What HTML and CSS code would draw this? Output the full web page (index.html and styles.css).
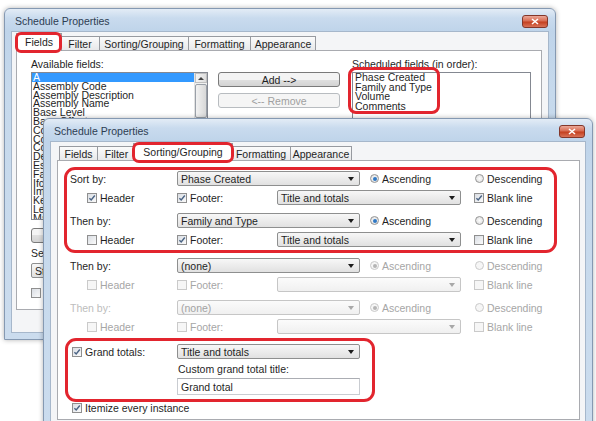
FILE: index.html
```html
<!DOCTYPE html>
<html lang="en">
<head>
  <meta charset="UTF-8">
  <title>Schedule Properties</title>
  <link rel="stylesheet" href="styles.css">
</head>
<body>
  <!-- back window: Fields tab -->
  <div class="win win-back">
    <div class="titlebar">
      <span class="title">Schedule Properties</span>
      <span class="close"><svg width="8" height="7" viewBox="0 0 8 7"><path d="M1 1 7 6M7 1 1 6" stroke="#fff" stroke-width="1.6"/></svg></span>
    </div>
    <div class="client">
      <div class="tabs">
        <span class="tab active mark mark-fields bt-fields">Fields</span>
        <span class="tab bt-filter">Filter</span>
        <span class="tab bt-sort">Sorting/Grouping</span>
        <span class="tab bt-format">Formatting</span>
        <span class="tab bt-appear">Appearance</span>
      </div>
      <div class="panel fields-panel">
        <div class="avail-col">
          <div class="flabel">Available fields:</div>
          <div class="listbox avail-list">
            <div class="items">
              <div class="sel">A</div>
              <div>Assembly Code</div>
              <div>Assembly Description</div>
              <div>Assembly Name</div>
              <div>Base Level</div>
              <div>Base Offset</div>
              <div>Comments</div>
              <div>Cost</div>
              <div>Count</div>
              <div>Description</div>
              <div>Estimated Reinforcement Volume</div>
              <div>Family</div>
              <div>IfcGUID</div>
              <div>Image</div>
              <div>Keynote</div>
              <div>Length</div>
              <div>Manufacturer</div>
            </div>
            <div class="vscroll">
              <span class="sb-btn"></span>
              <span class="sb-thumb"></span>
            </div>
          </div>
          <div class="btn param-btn">Add Parameter...</div>
          <div class="flabel gap-label">Select available fields from:</div>
          <div class="combo from-combo">Structural Columns</div>
          <div class="chk linked"><i class="box"></i>Include elements in linked files</div>
        </div>
        <div class="btn-col">
          <div class="btn">Add --&gt;</div>
          <div class="btn dis">&lt;-- Remove</div>
        </div>
        <div class="sched-col">
          <div class="flabel">Scheduled fields (in order):</div>
          <div class="listbox sched-list">
            <div class="items mark mark-sched">
              <div>Phase Created</div>
              <div>Family and Type</div>
              <div>Volume</div>
              <div>Comments</div>
            </div>
          </div>
        </div>
      </div>
    </div>
  </div>

  <!-- front window: Sorting/Grouping tab -->
  <div class="win win-front">
    <div class="titlebar">
      <span class="title">Schedule Properties</span>
      <span class="close"><svg width="8" height="7" viewBox="0 0 8 7"><path d="M1 1 7 6M7 1 1 6" stroke="#fff" stroke-width="1.6"/></svg></span>
    </div>
    <div class="client">
      <div class="tabs">
        <span class="tab ft-fields">Fields</span>
        <span class="tab ft-filter">Filter</span>
        <span class="tab active mark mark-tab ft-sort">Sorting/Grouping</span>
        <span class="tab ft-format">Formatting</span>
        <span class="tab ft-appear">Appearance</span>
      </div>
      <div class="panel sort-panel">
        <div class="mark mark-sort">
          <div class="sgroup">
            <span class="slabel">Sort by:</span>
            <span class="combo c-by">Phase Created</span>
            <span class="rad asc on"><i class="dot"></i>Ascending</span>
            <span class="rad desc"><i class="dot"></i>Descending</span>
            <span class="chk hdr"><i class="box"><svg width="8" height="8" viewBox="0 0 8 8"><path d="M1.4 4.2 3.2 6 6.8 1.5" fill="none" stroke="#4a6384" stroke-width="1.4"/></svg></i>Header</span>
            <span class="chk ftr"><i class="box"><svg width="8" height="8" viewBox="0 0 8 8"><path d="M1.4 4.2 3.2 6 6.8 1.5" fill="none" stroke="#4a6384" stroke-width="1.4"/></svg></i>Footer:</span>
            <span class="combo c-ft">Title and totals</span>
            <span class="chk blank"><i class="box"><svg width="8" height="8" viewBox="0 0 8 8"><path d="M1.4 4.2 3.2 6 6.8 1.5" fill="none" stroke="#4a6384" stroke-width="1.4"/></svg></i>Blank line</span>
          </div>
          <div class="sgroup">
            <span class="slabel">Then by:</span>
            <span class="combo c-by">Family and Type</span>
            <span class="rad asc on"><i class="dot"></i>Ascending</span>
            <span class="rad desc"><i class="dot"></i>Descending</span>
            <span class="chk hdr"><i class="box"></i>Header</span>
            <span class="chk ftr"><i class="box"><svg width="8" height="8" viewBox="0 0 8 8"><path d="M1.4 4.2 3.2 6 6.8 1.5" fill="none" stroke="#4a6384" stroke-width="1.4"/></svg></i>Footer:</span>
            <span class="combo c-ft">Title and totals</span>
            <span class="chk blank"><i class="box"></i>Blank line</span>
          </div>
        </div>
        <div class="sgroup after-mark">
          <span class="slabel">Then by:</span>
          <span class="combo c-by">(none)</span>
          <span class="rad asc on dis"><i class="dot"></i>Ascending</span>
          <span class="rad desc dis"><i class="dot"></i>Descending</span>
          <span class="chk hdr dis"><i class="box"></i>Header</span>
          <span class="chk ftr dis"><i class="box"></i>Footer:</span>
          <span class="combo c-ft dis"></span>
          <span class="chk blank dis"><i class="box"></i>Blank line</span>
        </div>
        <div class="sgroup">
          <span class="slabel dis light">Then by:</span>
          <span class="combo c-by dis">(none)</span>
          <span class="rad asc on dis"><i class="dot"></i>Ascending</span>
          <span class="rad desc dis"><i class="dot"></i>Descending</span>
          <span class="chk hdr dis"><i class="box"></i>Header</span>
          <span class="chk ftr dis"><i class="box"></i>Footer:</span>
          <span class="combo c-ft dis"></span>
          <span class="chk blank dis"><i class="box"></i>Blank line</span>
        </div>
        <div class="grand mark mark-grand">
          <span class="chk g-chk"><i class="box"><svg width="8" height="8" viewBox="0 0 8 8"><path d="M1.4 4.2 3.2 6 6.8 1.5" fill="none" stroke="#4a6384" stroke-width="1.4"/></svg></i>Grand totals:</span>
          <span class="combo">Title and totals</span>
          <span class="g-cap">Custom grand total title:</span>
          <span class="tbox">Grand total</span>
        </div>
        <div class="chk itemize"><i class="box"><svg width="8" height="8" viewBox="0 0 8 8"><path d="M1.4 4.2 3.2 6 6.8 1.5" fill="none" stroke="#4a6384" stroke-width="1.4"/></svg></i>Itemize every instance</div>
      </div>
    </div>
  </div>
</body>
</html>
```

FILE: styles.css
```css
* { box-sizing: border-box; }
body { margin: 0; width: 596px; height: 421px; overflow: hidden; position: relative; background: #fff; font-family: "Liberation Sans", Arial, sans-serif; font-size: 10.5px; color: #1f1f1f; }

/* windows */
.win { position: absolute; display: flex; flex-direction: column; padding: 0 6px 6px; border: 1px solid #8599b2; border-radius: 6px 6px 0 0; background: linear-gradient(#e3ecf6, #c9dbee 9px, #bfd4ea 22px, #c6d9ec 80px, #cbdcee); box-shadow: 0 0 5px rgba(0, 0, 0, .3); }
.win-back { left: 4px; top: 8px; width: 552px; height: 332px; }
.win-front { left: 43px; top: 118px; width: 550px; height: 330px; }

.titlebar { height: 22px; padding: 2px 1px 0 4px; display: flex; align-items: center; justify-content: space-between; flex: none; }
.title { color: #2d3d52; }
.close { width: 26px; height: 13px; border: 1px solid #83372a; border-radius: 3px; background: linear-gradient(#eba899, #d86c52 45%, #c4401f 55%, #d97358); display: flex; align-items: center; justify-content: center; }

.client { flex: 1; display: flex; flex-direction: column; background: #f4f5f7; border: 1px solid #a6b7cb; }
.win-back .client { padding: 1px 6px 22px 4px; }
.win-front .client { padding: 1px 5px 0 6px; }

/* tabs */
.tabs { display: flex; align-items: flex-end; height: 17px; padding-left: 2px; position: relative; z-index: 1; flex: none; }
.tab { height: 14px; display: flex; align-items: center; justify-content: center; border: 1px solid #979aa0; border-bottom: 0; background: linear-gradient(#fbfbfb, #e7e8ea); margin-right: -1px; white-space: nowrap; }
.tab.active { height: 18px; margin: 0 -2px -1px -2px; padding-bottom: 2px; background: #fff; position: relative; z-index: 2; }
.bt-fields { width: 46px; }
.bt-filter { width: 40px; }
.bt-sort { width: 90px; }
.bt-format { width: 63px; }
.bt-appear { width: 66px; }
.ft-fields { width: 39px; }
.ft-filter { width: 39px; }
.ft-sort { width: 100px; }
.ft-format { width: 60px; }
.ft-appear { width: 62px; }

.panel { background: #fff; border: 1px solid #a9abb0; }
.fields-panel { flex: 1; display: flex; padding: 7px 0 0 14px; }
.sort-panel { height: 260px; flex: none; padding: 10px 0 0 12px; }

/* red annotation marks */
.mark { position: relative; }
.mark::after { content: ""; position: absolute; border: 3px solid #e2252e; border-radius: 9px; pointer-events: none; }
.mark-fields::after { top: -2px; left: -2px; right: -1px; bottom: -2px; border-radius: 6px; }
.mark-tab::after { top: -2px; left: -2px; right: -2px; bottom: -2px; border-radius: 7px; }
.mark-sched::after { top: -6px; left: -7px; right: -8px; bottom: -2px; border-radius: 8px; }
.mark-sort { width: 487px; }
.mark-sort::after { top: -4px; left: -6px; right: 0; bottom: -6px; border-radius: 11px; }
.mark-grand::after { top: -6px; left: -5px; right: 0; bottom: -7px; border-radius: 11px; }

/* fields tab */
.flabel { height: 12px; line-height: 12px; white-space: nowrap; }
.avail-col { width: 177px; display: flex; flex-direction: column; }
.listbox { background: #fff; border: 1px solid #848891; margin-top: 2px; }
.avail-list { height: 148px; display: flex; overflow: hidden; }
.items { white-space: nowrap; }
.avail-list .items { flex: 1; line-height: 8.8px; overflow: hidden; }
.avail-list .items div { padding-left: 1px; }
.sel { background: #3399ff; color: #fff; }
.vscroll { width: 13px; display: flex; flex-direction: column; background: #f1f1f1; border-left: 1px solid #e2e2e2; }
.sb-btn { height: 10px; border: 1px solid #c0c0c0; background: linear-gradient(90deg, #f4f4f4, #dedede); display: flex; align-items: center; justify-content: center; }
.sb-btn::after { content: ""; border-bottom: 3px solid #444; border-left: 3px solid transparent; border-right: 3px solid transparent; }
.sb-thumb { height: 34px; margin-top: 1px; border: 1px solid #9aa0a8; border-radius: 2px; background: linear-gradient(90deg, #f2f2f2, #d8d8d8); }
.param-btn { margin-top: 8px; }
.gap-label { margin-top: 4px; }
.from-combo { margin-top: 4px; }
.linked { margin-top: 9px; height: 12px; }

.btn-col { width: 122px; margin: 14px 0 0 10px; display: flex; flex-direction: column; gap: 6px; }
.btn { height: 15px; display: flex; align-items: center; justify-content: center; border: 1px solid #7a7a7a; border-radius: 3px; background: linear-gradient(#f4f4f4 50%, #e0e0e0 50%, #d3d3d3); white-space: nowrap; }
.btn.dis { border-color: #b8bcc0; background: #f5f5f5; color: #a0a0a0; }

.sched-col { width: 179px; margin-left: 12px; }
.sched-list { height: 148px; padding: 0 2px; }
.sched-list .items { display: inline-block; line-height: 9.7px; }

/* controls */
.combo { height: 15px; display: flex; align-items: center; justify-content: space-between; padding: 0 5px 0 3px; border: 1px solid #8e8f8f; border-radius: 2px; background: linear-gradient(#f7f7f7, #e1e1e1); white-space: nowrap; }
.combo::after { content: ""; margin-left: auto; border-top: 4px solid #1c1c1c; border-left: 3px solid transparent; border-right: 3px solid transparent; }
.combo.dis { color: #a3a3a3; border-color: #c6c6c6; background: linear-gradient(#fbfbfb, #f0f0f0); }
.combo.dis::after { border-top-color: #a8a8a8; }

.chk, .rad { display: flex; align-items: center; gap: 3px; white-space: nowrap; }
.box { width: 10px; height: 10px; flex: none; border: 1px solid #8f8f8f; background: linear-gradient(135deg, #d9dde3, #fbfbfb); display: flex; align-items: center; justify-content: center; }
.dot { width: 9px; height: 9px; flex: none; border-radius: 50%; border: 1px solid #959595; background: radial-gradient(#fdfdfd, #d9d9d9); display: flex; align-items: center; justify-content: center; }
.rad.on .dot::after { content: ""; width: 4px; height: 4px; border-radius: 50%; background: #2f78c4; }
.dis { color: #a6a6a6; }
.dis .box, .dis .dot { border-color: #cacaca; background: #f6f6f6; }
.rad.on.dis .dot::after { background: #b5b5b5; }
.light { color: #bdbdbd; }

/* sorting tab grid */
.sgroup { display: grid; grid-template-columns: 107px 100px 83px 10px 104px 83px; grid-auto-rows: 15px; row-gap: 4px; align-items: center; }
.sgroup + .sgroup { margin-top: 8px; }
.after-mark { margin-top: 11px; }
.slabel { grid-column: 1; }
.c-by { grid-column: 2 / 4; }
.asc { grid-column: 5; }
.desc { grid-column: 6; padding-left: 1px; }
.hdr { grid-column: 1; padding-left: 17px; }
.ftr { grid-column: 2; }
.c-ft { grid-column: 3 / 6; width: 184px; }
.blank { grid-column: 6; }

.grand { width: 305px; margin-top: 10px; display: grid; grid-template-columns: 107px 183px; grid-template-rows: 15px 13px 17px; row-gap: 3px; align-items: center; }
.g-chk { padding-left: 2px; }
.g-cap { grid-column: 2; padding-left: 1px; }
.tbox { grid-column: 2; height: 17px; display: flex; align-items: center; padding-left: 3px; border: 1px solid #c9ccd1; border-top-color: #abadb3; background: #fff; }
.itemize { margin-top: 5px; height: 15px; padding-left: 2px; }
```
